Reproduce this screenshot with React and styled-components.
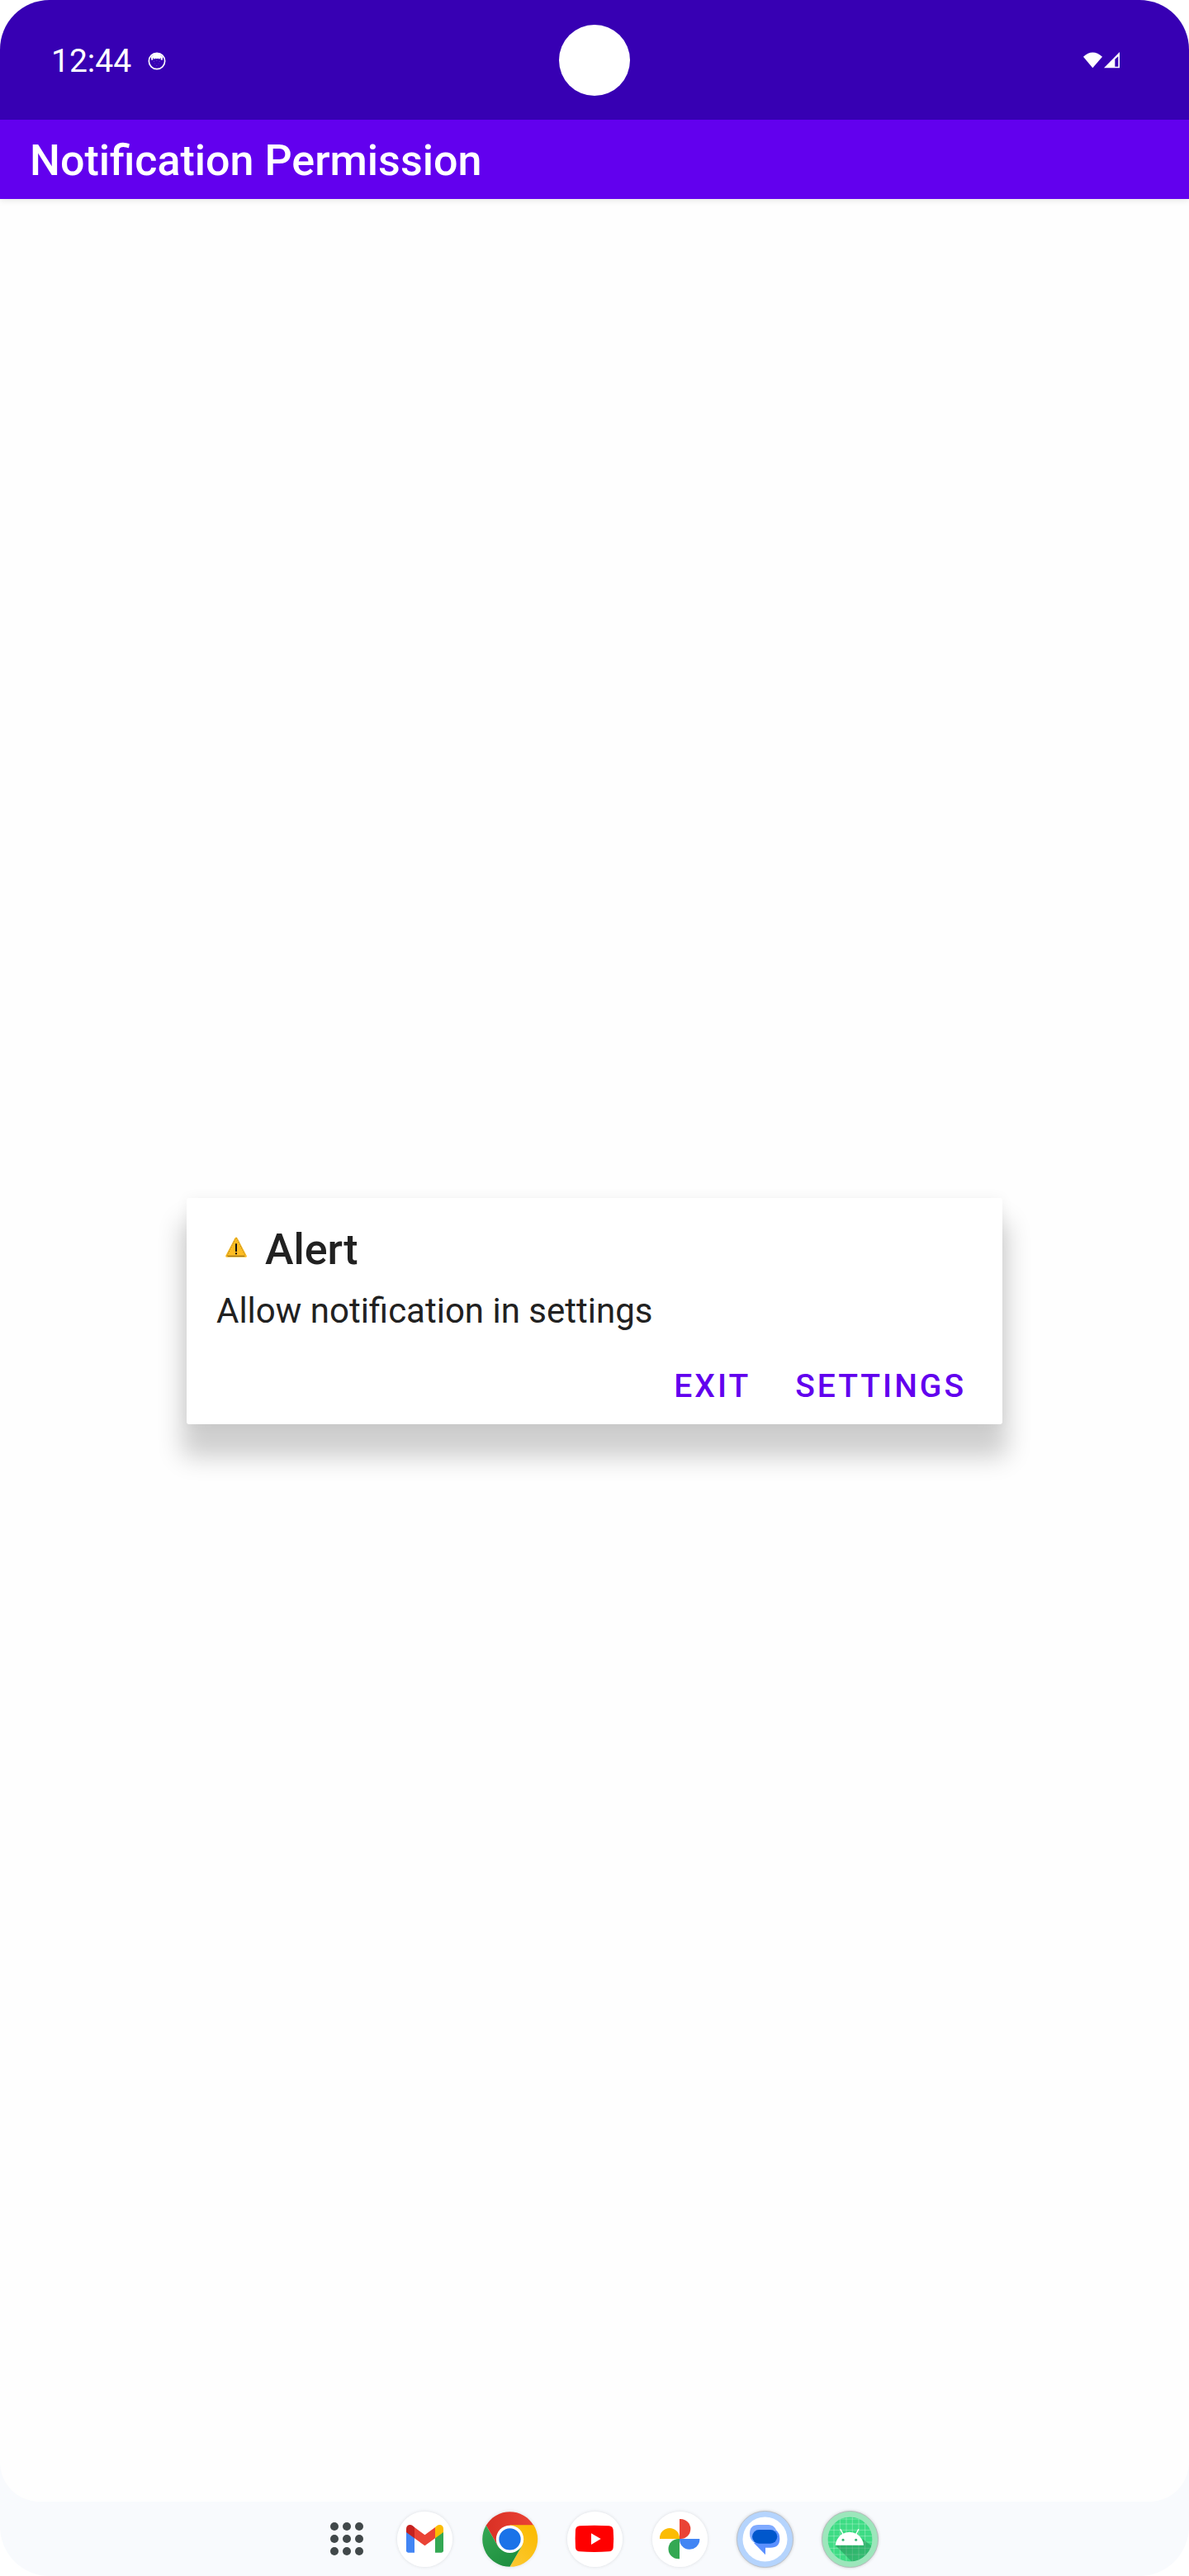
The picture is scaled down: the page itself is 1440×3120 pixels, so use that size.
import React from "react";
import styled, { createGlobalStyle } from "styled-components";

const GlobalStyle = createGlobalStyle`
  *, *::before, *::after { box-sizing: border-box; }
  html, body { margin: 0; background: #ffffff; }
  body { font-family: Roboto, "Noto Sans", sans-serif; }
`;

const Device = styled.div`
  display: flex;
  flex-direction: column;
  min-height: 100vh;
  overflow: hidden;
  border-radius: 60px;
  background: #f8fafd;
`;

const StatusBar = styled.header`
  display: grid;
  grid-template-columns: 1fr auto 1fr;
  align-items: center;
  height: 145px;
  padding: 0 84px 0 62px;
  background: #3700b3;
  color: #ffffff;
`;

const StatusGroup = styled.div`
  display: flex;
  align-items: center;
  justify-content: ${(p) => (p.$end ? "flex-end" : "flex-start")};
  gap: ${(p) => (p.$end ? 2 : 20)}px;
  padding-top: ${(p) => (p.$end ? 0 : 2)}px;
`;

const Clock = styled.time`
  font-size: 39px;
  line-height: 48px;
`;

const Camera = styled.span`
  width: 86px;
  height: 86px;
  margin-left: 22px;
  border-radius: 50%;
  background: #ffffff;
`;

const Window = styled.div`
  position: relative;
  flex: 1;
  display: flex;
  flex-direction: column;
  overflow: hidden;
  border-radius: 0 0 48px 48px;
  background: #fefefe;
`;

const AppBar = styled.div`
  display: flex;
  align-items: center;
  height: 96px;
  padding: 4px 36px 0;
  background: #6200ee;
  color: #ffffff;
  box-shadow: 0 1px 8px rgba(0, 0, 0, 0.12);
`;

const AppTitle = styled.h1`
  margin: 0;
  font-size: 52px;
  font-weight: 500;
  line-height: 64px;
`;

const Overlay = styled.div`
  position: absolute;
  inset: 0;
  display: flex;
  align-items: center;
  justify-content: center;
  padding: 0 48px;
`;

const Dialog = styled.section`
  width: 100%;
  max-width: 988px;
  padding: 32px 36px 16px;
  border-radius: 3px;
  background: #ffffff;
  color: #212121;
  box-shadow: 0 34px 30px 6px rgba(0, 0, 0, 0.19), 0 0 16px rgba(0, 0, 0, 0.05);
`;

const DialogHeader = styled.div`
  display: flex;
  align-items: center;
  gap: 22px;
  padding-left: 11px;

  svg {
    margin-bottom: 6px;
  }
`;

const DialogTitle = styled.h2`
  margin: 0;
  font-size: 52px;
  font-weight: 500;
  line-height: 62px;
`;

const Message = styled.p`
  margin: 15px 0 33px;
  font-size: 42px;
  line-height: 56px;
`;

const Actions = styled.div`
  display: flex;
  justify-content: flex-end;
  gap: 28px;
`;

const TextButton = styled.button`
  height: 60px;
  padding: 0 8px 0 18px;
  border: 0;
  background: none;
  color: #6200ee;
  font: 500 39px/60px Roboto, sans-serif;
  letter-spacing: 3px;
  text-transform: uppercase;
  cursor: pointer;
`;

const Dock = styled.nav`
  display: flex;
  align-items: center;
  justify-content: center;
  height: 90px;
`;

const DockButton = styled.button`
  display: flex;
  align-items: center;
  justify-content: center;
  width: 103px;
  height: 88px;
  padding: 0;
  border: 0;
  background: none;
  cursor: pointer;
`;

const DrawerButton = styled(DockButton)`
  width: 104px;
  padding-left: 18px;
`;

const AppIcon = styled.svg`
  display: block;
  width: 67px;
  height: 67px;
  overflow: visible;
  border-radius: 50%;
  box-shadow: 0 0 4px rgba(0, 0, 0, ${(p) => (p.$ring ? 0.3 : 0.12)});
`;

function NotificationIcon() {
  return (
    <svg width="22" height="22" viewBox="0 0 66 66" aria-hidden="true">
      <circle cx="33" cy="33" r="29" fill="none" stroke="#fff" strokeWidth="5" />
      <path d="M11 18Q33-8 55 18L52 28h-5v-8l-5 6-4-3-5 2-5-2-4 3-5-6v8h-5z" fill="#fff" />
      <path d="M15 29v-9M51 29v-9" stroke="#fff" strokeWidth="4" />
      <path d="M21 34h3M31 31h3M41 34h3M25 42h2M38 42h2M31 50h3" stroke="#8a6bd4" strokeWidth="2" />
    </svg>
  );
}

function WifiIcon() {
  return (
    <svg width="23" height="20" viewBox="0 0 69 60" aria-hidden="true">
      <path d="M0 17Q34-14 69 17L34 58z" fill="#fff" />
    </svg>
  );
}

function SignalIcon() {
  return (
    <svg width="19" height="20" viewBox="0 0 57 60" aria-hidden="true">
      <path d="M0 58L57 0v58z" fill="#fff" />
      <path d="M40 26v27h12V16z" fill="#3700b3" />
    </svg>
  );
}

function WarningIcon() {
  return (
    <svg width="26" height="26" viewBox="0 0 78 78" aria-hidden="true">
      <path d="M39 6L73 70H5z" fill="#fdbc22" stroke="#fdbc22" strokeWidth="9" strokeLinejoin="round" />
      <path d="M6 68L35 8q4-6 8 0l29 60" fill="none" stroke="#5b4520" strokeWidth="2" strokeDasharray="3 5" />
      <path d="M8 70h62" stroke="#4b3310" strokeWidth="2" />
      <path d="M39 25v29M39 58v6" stroke="#111" strokeWidth="6" />
    </svg>
  );
}

function DrawerIcon() {
  const spots = [15, 60, 105];
  return (
    <svg width="40" height="40" viewBox="0 0 120 120" fill="#41484a" aria-hidden="true">
      {spots.map((y) => spots.map((x) => <circle key={`${x}-${y}`} cx={x} cy={y} r="15" />))}
    </svg>
  );
}

function GmailIcon() {
  return (
    <AppIcon viewBox="0 0 201 201" aria-hidden="true">
      <circle cx="100.5" cy="100.5" r="100.5" fill="#fff" />
      <path d="M33 72l30 22v55H40q-7 0-7-7z" fill="#4285f4" />
      <path d="M138 94l30-22v70q0 7-7 7h-23z" fill="#34a853" />
      <path d="M63 57l37.500 28L138 57v40l-37.500 27L63 97z" fill="#ea4335" />
      <path d="M33 75V62c0-13 14-18 24-10l6 5v40z" fill="#c5221f" />
      <path d="M168 75V62c0-13-14-18-24-10l-6 5v40z" fill="#fbbc04" />
    </AppIcon>
  );
}

function ChromeIcon() {
  return (
    <AppIcon viewBox="0 0 201 201" aria-hidden="true">
      <defs>
        <linearGradient id="chromeRed" x1="0" x2="1">
          <stop offset="0" stopColor="#d93025" />
          <stop offset="1" stopColor="#ea4335" />
        </linearGradient>
        <linearGradient id="chromeYellow" x1="0" y1="1" x2="0.6" y2="0">
          <stop offset="0" stopColor="#fcc934" />
          <stop offset="1" stopColor="#fbbc04" />
        </linearGradient>
        <linearGradient id="chromeGreen" x1="0.7" y1="1" x2="0" y2="0">
          <stop offset="0" stopColor="#1e8e3e" />
          <stop offset="1" stopColor="#34a853" />
        </linearGradient>
      </defs>
      <path d="M14 50.500A100 100 0 0 1 187 50.500L100.500 100.500 57 125.500z" fill="url(#chromeRed)" />
      <path d="M187 48.500A100 100 0 0 1 100.500 200.500L144 125.500 100.500 48.500z" fill="url(#chromeYellow)" />
      <path d="M100.500 200.500A100 100 0 0 1 14 50.500L57 125.500 100.500 120 144 125.500z" fill="url(#chromeGreen)" />
      <circle cx="100.500" cy="100" r="50" fill="#fff" />
      <circle cx="100.500" cy="100" r="39.500" fill="#1a73e8" />
    </AppIcon>
  );
}

function YouTubeIcon() {
  return (
    <AppIcon viewBox="0 0 201 201" aria-hidden="true">
      <circle cx="100.5" cy="100.5" r="100.5" fill="#fff" />
      <path
        d="M45 52Q98 49 152 52Q165 53 167 66Q170 98 167 131Q165 144 152 145Q98 149 45 145Q32 144 30 131Q28 98 30 66Q32 53 45 52z"
        fill="#ff0000"
      />
      <path d="M87 79l35 20-35 21z" fill="#fff" />
    </AppIcon>
  );
}

function PhotosIcon() {
  return (
    <AppIcon viewBox="0 0 201 201" aria-hidden="true">
      <circle cx="100.5" cy="100.5" r="100.5" fill="#fff" />
      <path d="M99 99V27h4a36 36 0 0 1 0 72z" fill="#ea4335" />
      <path d="M99 99H27v-3a36 36 0 0 1 72 0z" fill="#fbbc04" />
      <path d="M99 99h73v4a36 36 0 0 1-73-4z" fill="#4285f4" />
      <path d="M99 99v73h-4a36 36 0 0 1 0-73z" fill="#34a853" />
    </AppIcon>
  );
}

function MessagesIcon() {
  return (
    <AppIcon $ring viewBox="0 0 201 201" aria-hidden="true">
      <circle cx="100.5" cy="100.5" r="102" fill="#b5d4fd" stroke="#bcc1c8" strokeWidth="3" />
      <circle cx="100.5" cy="100.5" r="81" fill="#fff" />
      <path d="M76 48h38q18 0 27 18L60 112q-15-12-15-32 0-32 31-32z" fill="#7faaff" />
      <path d="M140 67q14 11 14 31 0 33-34 33h-18v26L60 114z" fill="#5c91ff" />
      <rect x="54" y="66" width="91" height="50" rx="25" fill="#0057cc" />
    </AppIcon>
  );
}

function AndroidIcon() {
  return (
    <AppIcon $ring viewBox="0 0 201 201" aria-hidden="true">
      <defs>
        <clipPath id="androidDisc">
          <circle cx="100.5" cy="100.5" r="81" />
        </clipPath>
        <linearGradient id="androidShade" x1="0" y1="0" x2="1" y2="1">
          <stop offset="0" stopColor="#1d7d4a" stopOpacity="0.55" />
          <stop offset="1" stopColor="#1d7d4a" stopOpacity="0.2" />
        </linearGradient>
      </defs>
      <circle cx="100.5" cy="100.5" r="102" fill="#9ce6bb" stroke="#b4bdb9" strokeWidth="3" />
      <g clipPath="url(#androidDisc)">
        <path d="M19 19h163v163H19z" fill="#3ddc84" />
        <path
          d="M42 19v163M64 19v163M87 19v163M109 19v163M132 19v163M155 19v163M19 27h163M19 45h163M19 67h163M19 89h163M19 111h163M19 133h163M19 156h163"
          stroke="#fff"
          strokeOpacity="0.35"
          strokeWidth="2.5"
        />
        <path d="M47 122L127 202 222 160 145 98l5 24z" fill="url(#androidShade)" />
      </g>
      <path d="M66 65l9 17M131 65l-9 17" stroke="#fff" strokeWidth="4" strokeLinecap="round" />
      <path d="M47 122q3-25 24-40 27-15 55 0 21 15 24 40z" fill="#fff" />
      <circle cx="75" cy="103" r="4.500" fill="#35b272" />
      <circle cx="122" cy="103" r="4.500" fill="#35b272" />
    </AppIcon>
  );
}

const dockApps = [
  { label: "Gmail", Icon: GmailIcon },
  { label: "Chrome", Icon: ChromeIcon },
  { label: "YouTube", Icon: YouTubeIcon },
  { label: "Photos", Icon: PhotosIcon },
  { label: "Messages", Icon: MessagesIcon },
  { label: "Android", Icon: AndroidIcon },
];

export default function App() {
  return (
    <>
      <GlobalStyle />
      <Device>
        <StatusBar>
          <StatusGroup>
            <Clock>12:44</Clock>
            <NotificationIcon />
          </StatusGroup>
          <Camera />
          <StatusGroup $end>
            <WifiIcon />
            <SignalIcon />
          </StatusGroup>
        </StatusBar>
        <Window>
          <AppBar>
            <AppTitle>Notification Permission</AppTitle>
          </AppBar>
          <Overlay>
            <Dialog role="alertdialog" aria-labelledby="alert-title" aria-describedby="alert-message">
              <DialogHeader>
                <WarningIcon />
                <DialogTitle id="alert-title">Alert</DialogTitle>
              </DialogHeader>
              <Message id="alert-message">Allow notification in settings</Message>
              <Actions>
                <TextButton type="button">Exit</TextButton>
                <TextButton type="button">Settings</TextButton>
              </Actions>
            </Dialog>
          </Overlay>
        </Window>
        <Dock>
          <DrawerButton type="button" aria-label="All apps">
            <DrawerIcon />
          </DrawerButton>
          {dockApps.map(({ label, Icon }) => (
            <DockButton key={label} type="button" aria-label={label}>
              <Icon />
            </DockButton>
          ))}
        </Dock>
      </Device>
    </>
  );
}
